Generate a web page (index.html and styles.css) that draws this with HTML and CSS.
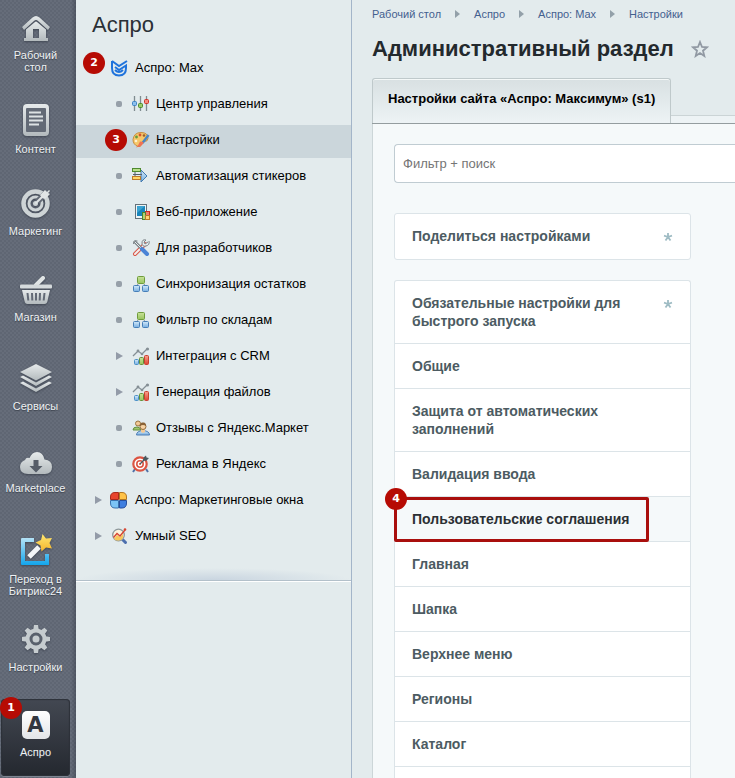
FILE: index.html
```html
<!DOCTYPE html>
<html lang="ru">
<head>
  <meta charset="UTF-8">
  <meta name="viewport" content="width=device-width, initial-scale=1.0">
  <title>Административный раздел</title>
  <link rel="stylesheet" href="styles.css">
</head>
<body>

  <!-- Shared gradients and repeated icons -->
  <svg class="defs" width="0" height="0" aria-hidden="true">
    <defs>
      <linearGradient id="metal" x1="0" y1="0" x2="0" y2="1">
        <stop offset="0" stop-color="#e6eaeb"/>
        <stop offset="1" stop-color="#b3babd"/>
      </linearGradient>
      <linearGradient id="sky" x1="0" y1="0" x2="0" y2="1">
        <stop offset="0" stop-color="#b4e2f6"/>
        <stop offset="1" stop-color="#12a5ec"/>
      </linearGradient>
      <linearGradient id="gold" x1="0" y1="0" x2="0" y2="1">
        <stop offset="0" stop-color="#ffe873"/>
        <stop offset="1" stop-color="#f5b52c"/>
      </linearGradient>
      <linearGradient id="blue" x1="0" y1="0" x2="0" y2="1">
        <stop offset="0" stop-color="#d4eafa"/>
        <stop offset="1" stop-color="#77aee0"/>
      </linearGradient>
      <linearGradient id="green" x1="0" y1="0" x2="0" y2="1">
        <stop offset="0" stop-color="#c8e29a"/>
        <stop offset="1" stop-color="#98c45e"/>
      </linearGradient>
      <linearGradient id="red" x1="0" y1="0" x2="0" y2="1">
        <stop offset="0" stop-color="#f9a08c"/>
        <stop offset="1" stop-color="#dd4432"/>
      </linearGradient>
    </defs>
    <symbol id="blocks" viewBox="0 0 18 18">
      <path d="M6 9L4 12M12 9l2 3" stroke="#8b989c"/>
      <rect x="5.5" y="1.5" width="7" height="7" rx="1" fill="url(#green)" stroke="#6f9c3c"/>
      <rect x="1.5" y="10.5" width="6" height="6" rx="1" fill="url(#blue)" stroke="#477fb8"/>
      <rect x="10.5" y="10.5" width="6" height="6" rx="1" fill="url(#blue)" stroke="#477fb8"/>
    </symbol>
    <symbol id="chart" viewBox="0 0 18 18">
      <path d="M1 9l5-5 4 3 5-5" fill="none" stroke="#858f95" stroke-width="1.3"/>
      <circle cx="6" cy="4" r="1.4" fill="#858f95"/><circle cx="10" cy="7" r="1.3" fill="#858f95"/><circle cx="15.5" cy="2" r="1.6" fill="#858f95"/>
      <rect x="2.5" y="12.5" width="4" height="5" rx="1" fill="url(#blue)" stroke="#4c91c6"/>
      <rect x="7.5" y="10.5" width="4" height="7" rx="1" fill="url(#green)" stroke="#62913a"/>
      <rect x="12.5" y="8.5" width="4" height="9" rx="1" fill="url(#red)" stroke="#c9402f"/>
    </symbol>
    <symbol id="asterisk" viewBox="-5 -5 10 10">
      <path d="M0 0V-4M0 0L4-1.300M0 0L2.500 3.500M0 0L-2.500 3.500M0 0L-4-1.300" fill="none" stroke="#9fbcc4" stroke-width="1.8"/>
    </symbol>
  </svg>

  <div class="layout">

    <!-- Global menu -->
    <nav class="sidebar">
      <a href="#" class="side-item">
        <span class="side-icon side-icon-first"><svg width="28" height="27" viewBox="0 0 28 27" fill="url(#metal)">
          <path d="M0 12L10.500 2.500Q14-.5 17.500 2.500L28 12l-2 3-10-9Q14 4 12 6L2 15z"/>
          <path fill-rule="evenodd" d="M4 14.500L13 7q1-1 2 0l9 7.500V23h2v3H2v-3h2zM11 14v9h6v-9z"/>
        </svg></span>
        <span>Рабочий<br>стол</span>
      </a>
      <a href="#" class="side-item">
        <span class="side-icon"><svg width="26" height="32" viewBox="0 0 26 32">
          <rect width="26" height="32" rx="4" fill="url(#metal)"/>
          <rect x="3" y="4" width="20" height="24" rx="1" fill="#636a76"/>
          <path d="M6 8.500h12M6 12.500h14M6 16.500h14M6 20.500h10" stroke="#dde2e4" stroke-width="2"/>
        </svg></span>
        <span>Контент</span>
      </a>
      <a href="#" class="side-item">
        <span class="side-icon"><svg width="30" height="30" viewBox="0 0 30 30">
          <circle cx="14.5" cy="15.5" r="12" fill="none" stroke="#ced4d6" stroke-width="4.5"/>
          <circle cx="14.5" cy="15.5" r="6.5" fill="none" stroke="#ced4d6" stroke-width="3"/>
          <circle cx="14.5" cy="15.5" r="2.5" fill="#ced4d6"/>
          <path d="M16 14L27 3" stroke="#636a76" stroke-width="6"/>
          <path d="M14.500 15.500L23 7" stroke="#e1e5e6" stroke-width="2"/>
          <path d="M19 7l5-5 2 2 2-2 1 1-2 2 2 1-5 5-3-1z" fill="#e1e5e6"/>
        </svg></span>
        <span>Маркетинг</span>
      </a>
      <a href="#" class="side-item">
        <span class="side-icon side-icon-tall"><svg width="32" height="28" viewBox="0 0 32 28">
          <path d="M16 9L23 2" stroke="#e0e4e5" stroke-width="4" stroke-linecap="round"/>
          <rect y="8.5" width="32" height="4" rx="1" fill="#d5dadc"/>
          <path fill="url(#metal)" d="M2 14h28l-2.500 11q-.5 3-3 3h-17q-2.500 0-3-3z"/>
          <path d="M7.500 17l.8 7.500M12 17l.3 7.500M16 17v7.500M20 17l-.3 7.500M24.500 17l-.8 7.500" stroke="#636a76" stroke-width="2"/>
        </svg></span>
        <span>Магазин</span>
      </a>
      <a href="#" class="side-item">
        <span class="side-icon side-icon-high"><svg width="32" height="30" viewBox="0 0 32 30" fill="url(#metal)">
          <path d="M16 1l16 8-16 8.500L0 9z"/>
          <path d="M0 14l3-1.500 13 7 13-7 3 1.500-16 9z"/>
          <path d="M0 20l3-1.500 13 7 13-7 3 1.500-16 9z"/>
        </svg></span>
        <span>Сервисы</span>
      </a>
      <a href="#" class="side-item">
        <span class="side-icon"><svg width="32" height="24" viewBox="0 0 32 24">
          <path fill="url(#metal)" d="M8 23q-8 0-8-7 0-5 5-7Q6 6 9.500 7 12 1 17 1q6 0 7.500 7.500Q32 9 32 16q0 7-7 7z"/>
          <path fill="#565d68" d="M13.500 9h5v6h4L16 21.500 9.500 15h4z"/>
        </svg></span>
        <span>Marketplace</span>
      </a>
      <a href="#" class="side-item">
        <span class="side-icon side-icon-wide"><svg width="32" height="32" viewBox="0 0 32 32">
          <path fill="url(#sky)" d="M2 4h12v4H5v19h20v-7h4v11H2q-1 0-1-1V5q0-1 1-1z"/>
          <path d="M9 23L19 13" stroke="#f4f6f8" stroke-width="5"/>
          <path fill="url(#gold)" d="M22.500 0l3.500 4.500 6-.500-2.500 5 2.500 5.500-6-1-4.500 4-1-6-5-3 5.500-2.500z"/>
        </svg></span>
        <span>Переход в<br>Битрикс24</span>
      </a>
      <a href="#" class="side-item">
        <span class="side-icon side-icon-low"><svg width="30" height="30" viewBox="-15 -15 30 30">
          <g fill="#c6cccf">
            <path id="tooth" d="M-3-8l1-6h4l1 6v16l-1 6h-4l-1-6z"/>
            <use href="#tooth" transform="rotate(45)"/>
            <use href="#tooth" transform="rotate(90)"/>
            <use href="#tooth" transform="rotate(135)"/>
          </g>
          <circle r="10.5" fill="#c6cccf"/>
          <circle r="5" fill="#c6cccf" stroke="#59606c" stroke-width="3"/>
        </svg></span>
        <span>Настройки</span>
      </a>
      <a href="#" class="side-item side-item-active">
        <span class="badge badge-corner">1</span>
        <span class="side-logo">A</span>
        <span>Аспро</span>
      </a>
    </nav>

    <!-- Section tree -->
    <aside class="tree">
      <h2 class="tree-title">Аспро</h2>
      <ul class="tree-list">
        <li class="tree-row tree-open">
          <span class="badge badge-open">2</span>
          <svg class="tree-icon" viewBox="0 0 18 18" fill="none" stroke="#1f73dc" stroke-width="2">
            <path d="M2 2v7q0 7.500 7 7.500T16 9V6.500L9 11 5 8M2 2l7 5 8-5"/>
            <path d="M5 11q4 4 8 0"/>
          </svg>
          <a href="#">Аспро: Max</a>
        </li>
        <li class="tree-row tree-sub">
          <span class="dot"></span>
          <svg class="tree-icon" viewBox="0 0 18 18">
            <path d="M2.500 1v15M8.500 1v15M14.500 1v15" stroke="#7f8b90" stroke-width="1.3"/>
            <rect x=".5" y="6.5" width="4" height="4" rx="1" fill="#8cc0ee" stroke="#3f83c4"/>
            <rect x="6.5" y="8.5" width="4" height="4" rx="1" fill="#9ccb6a" stroke="#4c8a2a"/>
            <rect x="12.5" y="4.5" width="4" height="4" rx="1" fill="#f58b7e" stroke="#cf3027"/>
          </svg>
          <a href="#">Центр управления</a>
        </li>
        <li class="tree-row tree-sub tree-current">
          <span class="badge badge-current">3</span>
          <svg class="tree-icon" viewBox="0 0 18 18">
            <path d="M9 1.500q7 0 7 6 0 3-4 3-3 0-3 3 0 3-3 2-5-2-5-7 1-7 8-7z" fill="#f6c76a" stroke="#c98d3c"/>
            <circle cx="8" cy="4" r="1.4" fill="#d6522f"/><circle cx="4.5" cy="6" r="1.4" fill="#659c3d"/><circle cx="4" cy="10" r="1.3" fill="#fff1cd"/><circle cx="12" cy="4.5" r="1.3" fill="#9a5e2c"/>
            <path d="M16.500 4l-6 8" stroke="#4787c5" stroke-width="2.5"/>
            <path d="M11.500 11q0 4-7.500 5.500 3-3 4-6z" fill="#ef7254"/>
          </svg>
          <a href="#">Настройки</a>
        </li>
        <li class="tree-row tree-sub">
          <span class="dot"></span>
          <svg class="tree-icon" viewBox="0 0 18 18">
            <path d="M9 3l6 6-6 6z" fill="url(#blue)" stroke="#4379ad"/>
            <path d="M3 5v4M1 7.500h9" stroke="#55606a"/>
            <rect x=".5" y="1.5" width="8" height="3" fill="#b8df8a" stroke="#4e8a2f"/>
            <rect x=".5" y="9.5" width="8" height="3" fill="#ffd766" stroke="#bd7a28"/>
          </svg>
          <a href="#">Автоматизация стикеров</a>
        </li>
        <li class="tree-row tree-sub">
          <span class="dot"></span>
          <svg class="tree-icon" viewBox="0 0 18 18">
            <rect x="3.5" y="1.5" width="11" height="14" fill="#eef3f5" stroke="#65727a"/>
            <path d="M5 3h8v10H5z" fill="#1985bb"/>
            <path d="M5 3h8L5 10z" fill="#3ba3d1"/>
            <rect x="13.5" y="8.5" width="4" height="4" fill="#f27b6a" stroke="#c92f24"/>
            <rect x="10.5" y="9.5" width="3" height="7" fill="#add478" stroke="#4d832c"/>
            <rect x="13.5" y="12.5" width="4" height="4" fill="#ffd475" stroke="#b87925"/>
          </svg>
          <a href="#">Веб-приложение</a>
        </li>
        <li class="tree-row tree-sub">
          <span class="dot"></span>
          <svg class="tree-icon" viewBox="0 0 18 18" fill="none">
            <path d="M3 15L13 5" stroke="#d95748" stroke-width="4" stroke-linecap="round"/>
            <path d="M3 15L13 5" stroke="#f3eeee" stroke-width="2" stroke-linecap="round"/>
            <path d="M16 3l-3 2-1-2 2-2q-4-1-4 3t4 3 3-5" stroke="#7c8488" fill="#e8ecee"/>
            <path d="M2 2l8 8" stroke="#7c8488" stroke-width="3"/>
            <path d="M2 2l8 8" stroke="#e8ecee"/>
            <path d="M10 10l5 5" stroke="#4b83d6" stroke-width="4" stroke-linecap="round"/>
            <path d="M1.500 5q0-4 4-3" stroke="#7c8488"/>
          </svg>
          <a href="#">Для разработчиков</a>
        </li>
        <li class="tree-row tree-sub">
          <span class="dot"></span>
          <svg class="tree-icon"><use href="#blocks"/></svg>
          <a href="#">Синхронизация остатков</a>
        </li>
        <li class="tree-row tree-sub">
          <span class="dot"></span>
          <svg class="tree-icon"><use href="#blocks"/></svg>
          <a href="#">Фильтр по складам</a>
        </li>
        <li class="tree-row tree-sub">
          <span class="arrow"></span>
          <svg class="tree-icon"><use href="#chart"/></svg>
          <a href="#">Интеграция с CRM</a>
        </li>
        <li class="tree-row tree-sub">
          <span class="arrow"></span>
          <svg class="tree-icon"><use href="#chart"/></svg>
          <a href="#">Генерация файлов</a>
        </li>
        <li class="tree-row tree-sub">
          <span class="dot"></span>
          <svg class="tree-icon" viewBox="0 0 18 18">
            <path d="M1 11q0-3 4-3 3 0 4 3z" fill="#a2c66c" stroke="#63903f"/>
            <circle cx="6" cy="4.5" r="2.5" fill="#f3c996" stroke="#9a7440"/>
            <path d="M4.500 16q0-4 6.500-4.500 6.500.5 6.500 4.500z" fill="url(#blue)" stroke="#4f7eb5"/>
            <path d="M9 10h4v3l-2 1-2-1z" fill="#f3c996"/>
            <circle cx="11" cy="7.5" r="3" fill="#f7d3a4" stroke="#936a3b"/>
            <path d="M8 7q0-4 3-3.500 3-.5 3 3.500-3-2-6 0z" fill="#8a6236"/>
          </svg>
          <a href="#">Отзывы с Яндекс.Маркет</a>
        </li>
        <li class="tree-row tree-sub">
          <span class="dot"></span>
          <svg class="tree-icon" viewBox="0 0 18 18" fill="none">
            <path d="M3 14l-2 3M14 14l2 3" stroke="#5272a8" stroke-width="2"/>
            <circle cx="8" cy="9" r="6.7" fill="#fff" stroke="#dc5442" stroke-width="2.2"/>
            <circle cx="8" cy="9" r="3.2" stroke="#dc5442" stroke-width="1.6"/>
            <circle cx="8" cy="9" r="1" fill="#dc5442"/>
            <path d="M8 9l6-6" stroke="#4a5960" stroke-width="1.3"/>
            <path d="M11 5l.5-2.500L14 .5l.5 2 2.500.5-3 3z" fill="#4a5960"/>
          </svg>
          <a href="#">Реклама в Яндекс</a>
        </li>
        <li class="tree-row">
          <span class="arrow"></span>
          <svg class="tree-icon" viewBox="0 0 18 18">
            <path d="M8.500 1.500v7h-8V6Q.5 1.500 5 1.500z" fill="#e8442d" stroke="#a92a1c"/>
            <path d="M9.500 1.500v7h7V6q0-4.500-4.500-4.500z" fill="#ffc247" stroke="#b27621"/>
            <path d="M8.500 17v-7.500h-8V12q0 5 4.500 5z" fill="#7cc4f5" stroke="#3a72ad"/>
            <path d="M9.500 17v-7.500h7V12q0 5-4.500 5z" fill="#3f7fe0" stroke="#274f9d"/>
          </svg>
          <a href="#">Аспро: Маркетинговые окна</a>
        </li>
        <li class="tree-row">
          <span class="arrow"></span>
          <svg class="tree-icon" viewBox="0 0 18 18">
            <path d="M12.500 12.500l3 3" stroke="#4c6fae" stroke-width="3" stroke-linecap="round"/>
            <circle cx="8.5" cy="8" r="5.8" fill="#fdf3dc" stroke="#8f989b" stroke-width="1.3"/>
            <path d="M4 12l3-4 3 2 3-3q1 6-4.500 6.500Q5 13.500 4 12z" fill="#f8c75a"/>
            <path d="M3.500 10.500l3.500-4 3 2.500 5-6" fill="none" stroke="#d64431" stroke-width="1.4"/>
            <circle cx="15" cy="2.5" r="1.3" fill="#d64431"/>
          </svg>
          <a href="#">Умный SEO</a>
        </li>
      </ul>
    </aside>

    <!-- Page content -->
    <main class="content">
      <nav class="breadcrumbs">
        <a href="#">Рабочий стол</a>
        <span class="crumb-arrow"></span>
        <a href="#">Аспро</a>
        <span class="crumb-arrow"></span>
        <a href="#">Аспро: Max</a>
        <span class="crumb-arrow"></span>
        <a href="#">Настройки</a>
      </nav>

      <div class="heading">
        <h1>Административный раздел</h1>
        <button type="button" class="favorite" aria-label="В избранное">
          <svg width="18" height="18" viewBox="0 0 18 18">
            <path d="M9 2l2 5 5 .3-4 3.400L13.300 16 9 13l-4.300 3L6 10.700 2 7.300 7 7z" fill="none" stroke="#9199a3" stroke-width="1.8"/>
          </svg>
        </button>
      </div>

      <div class="tabs">
        <button type="button" class="tab">Настройки сайта «Аспро: Максимум» (s1)</button>
      </div>

      <div class="panel">
        <input type="text" class="search" placeholder="Фильтр + поиск" aria-label="Фильтр + поиск">

        <ul class="card">
          <li><a href="#">Поделиться настройками</a><svg class="mark"><use href="#asterisk"/></svg></li>
        </ul>

        <ul class="card card-long">
          <li><a href="#">Обязательные настройки для быстрого запуска</a><svg class="mark"><use href="#asterisk"/></svg></li>
          <li><a href="#">Общие</a></li>
          <li><a href="#">Защита от автоматических заполнений</a></li>
          <li><a href="#">Валидация ввода</a></li>
          <li class="selected"><a href="#">Пользовательские соглашения</a><span class="frame"></span><span class="badge badge-frame">4</span></li>
          <li><a href="#">Главная</a></li>
          <li><a href="#">Шапка</a></li>
          <li><a href="#">Верхнее меню</a></li>
          <li><a href="#">Регионы</a></li>
          <li><a href="#">Каталог</a></li>
        </ul>
      </div>
    </main>

  </div>

</body>
</html>
```

FILE: styles.css
```css
* {
  box-sizing: border-box;
}

body {
  font-family: "Liberation Sans", Arial, sans-serif;
  font-size: 13px;
  background: #e3ebed;
  color: #000;
  margin: 0;
}

a {
  color: inherit;
  text-decoration: none;
}

ul {
  list-style: none;
  margin: 0;
  padding: 0;
}

.defs {
  position: absolute;
}

.layout {
  display: flex;
  min-height: 100vh;
}

/* Global menu */
.sidebar {
  flex: none;
  width: 76px;
  padding-right: 5px;
  background-color: #666d7a;
  background-image:
    linear-gradient(to right, transparent 71px, rgba(40, 46, 58, 0.35)),
    radial-gradient(circle at 1px 1px, #5f6673 1px, transparent 1px),
    radial-gradient(circle at 3px 3px, #5f6673 1px, transparent 1px);
  background-size: auto, 4px 4px, 4px 4px;
}

.side-item {
  display: flex;
  flex-direction: column;
  align-items: center;
  gap: 7px;
  padding: 12px 0 14px;
  color: #eef1f3;
  font-size: 11px;
  line-height: 12px;
  text-align: center;
  text-shadow: 0 1px 1px #3b414c;
}

.side-icon {
  display: flex;
  align-items: flex-end;
  height: 37px;
  filter: drop-shadow(0 1px 1px rgba(40, 46, 58, 0.6));
}

.side-icon-first {
  height: 30px;
}

.side-icon-tall {
  height: 41px;
}

.side-icon-high {
  height: 44px;
}

.side-icon-wide {
  height: 46px;
}

.side-icon-low {
  height: 31px;
}

.side-item-active {
  position: relative;
  margin: 12px 1px 0;
  padding-bottom: 18px;
  border-radius: 4px;
  background: linear-gradient(#434852, #24282f);
  box-shadow: inset 0 0 1px 1px #2d3139, 0 1px 0 #7e8591;
}

.side-logo {
  width: 28px;
  height: 28px;
  border-radius: 5px;
  background: linear-gradient(#fff, #e3e5e8);
  color: #33373f;
  font: bold 21px/28px "DejaVu Sans", Verdana, sans-serif;
  text-shadow: none;
}

.badge {
  width: 22px;
  height: 22px;
  border-radius: 50%;
  background: #b60b04;
  color: #fff;
  font: bold 11px/22px "DejaVu Sans", Verdana, sans-serif;
  text-align: center;
  text-shadow: none;
  position: absolute;
}

.badge-corner {
  top: -2px;
  left: -1px;
}

.badge-open {
  top: -1px;
  left: 7px;
}

.badge-current {
  top: 4px;
  left: 29px;
}

.badge-frame {
  top: -9px;
  left: -10px;
}

/* Section tree */
.tree {
  flex: none;
  width: 276px;
  border-right: 1px solid #a3b5c9;
}

.tree-title {
  margin: 0;
  padding: 12px 16px 16px;
  color: #2b3036;
  font-size: 22px;
  font-weight: normal;
  line-height: 25px;
}

.tree-list {
  display: flex;
  flex-direction: column;
  gap: 3px;
  padding-bottom: 26px;
  border-bottom: 1px solid #b3c0ca;
  background: radial-gradient(ellipse 50% 12px at 50% 100%, #c9d5e0, transparent) no-repeat;
  box-shadow: 0 1px 0 #fff;
}

.tree-row {
  display: flex;
  align-items: center;
  height: 33px;
  padding: 0 0 4px 19px;
  position: relative;
}

.tree-open {
  padding-left: 34px;
}

.tree-sub {
  padding-left: 40px;
}

.tree-current {
  padding-left: 56px;
  background: #cbd6db;
}

.tree-icon {
  flex: none;
  width: 18px;
  height: 18px;
  margin-right: 7px;
}

.tree-sub .tree-icon {
  margin-right: 6px;
}

.arrow {
  flex: none;
  width: 15px;
}

.tree-sub .arrow {
  width: 16px;
}

.arrow::before {
  content: "";
  display: block;
  width: 0;
  border: 4px solid transparent;
  border-left: 7px solid #939ba8;
  border-right: 0;
}

.dot {
  flex: none;
  width: 16px;
}

.dot::before {
  content: "";
  display: block;
  width: 6px;
  height: 6px;
  border-radius: 2px;
  background: #97a0a9;
}

/* Page content */
.content {
  flex: 1;
  min-width: 0;
  display: flex;
  flex-direction: column;
  padding-left: 20px;
}

.breadcrumbs {
  display: flex;
  align-items: center;
  gap: 14px;
  height: 28px;
  color: #43608f;
  font-size: 11px;
  white-space: nowrap;
}

.crumb-arrow {
  width: 5px;
  border: 4px solid transparent;
  border-left: 5px solid #93a0a9;
  border-right: 0;
}

.heading {
  display: flex;
  align-items: center;
  gap: 17px;
  height: 50px;
  padding-bottom: 8px;
}

.heading h1 {
  margin: 0;
  color: #23292d;
  font-size: 22px;
  line-height: 26px;
  white-space: nowrap;
}

.favorite {
  display: flex;
  padding: 0;
  border: 0;
  background: none;
  cursor: pointer;
}

.tabs {
  display: flex;
  align-items: flex-end;
  border-bottom: 1px solid #949d9f;
}

.tabs::after {
  content: "";
  flex: 1;
  height: 7px;
  border-top: 1px solid #cbd4d6;
  background: #edf3f5;
}

.tab {
  height: 45px;
  padding: 0 15px 6px;
  border: 1px solid #bfc9cb;
  border-bottom: 0;
  border-radius: 3px 3px 0 0;
  background: linear-gradient(#d8e0e2, #edf3f5);
  box-shadow: inset 0 1px 0 #f4f8f8;
  color: #000;
  font: bold 13px "Liberation Sans", Arial, sans-serif;
  white-space: nowrap;
  cursor: pointer;
}

.panel {
  flex: 1;
  display: flex;
  flex-direction: column;
  padding: 20px 0 0 21px;
  border-left: 1px solid #ccd6d8;
  background: #f5f9fa;
}

.search {
  height: 39px;
  padding: 0 8px;
  border: 1px solid #c0ccd2;
  border-right: 0;
  border-radius: 4px 0 0 4px;
  background: #fff;
  font: 13px "Liberation Sans", Arial, sans-serif;
}

.search::placeholder {
  color: #757575;
}

.card {
  width: 297px;
  margin-top: 30px;
  border: 1px solid #dce4e8;
  border-radius: 3px;
  background: #fff;
  color: #4c5b62;
  font-size: 14px;
  font-weight: bold;
  line-height: 18px;
}

.card li {
  position: relative;
  display: flex;
  justify-content: space-between;
  gap: 24px;
  padding: 13px 17px 14px;
}

.card-long {
  flex: 1;
  margin-top: 20px;
  border-bottom: 0;
  border-radius: 3px 3px 0 0;
}

.card-long li {
  padding-bottom: 13px;
  border-bottom: 1px solid #dce4e8;
}

.card .selected {
  background: #f5f9fa;
  color: #2b3034;
}

.mark {
  flex: none;
  width: 10px;
  height: 10px;
  margin-top: 5px;
}

.frame {
  position: absolute;
  top: 0;
  left: -1px;
  width: 255px;
  height: 45px;
  border: 3px solid #a90f0d;
  border-radius: 2px;
}
```
